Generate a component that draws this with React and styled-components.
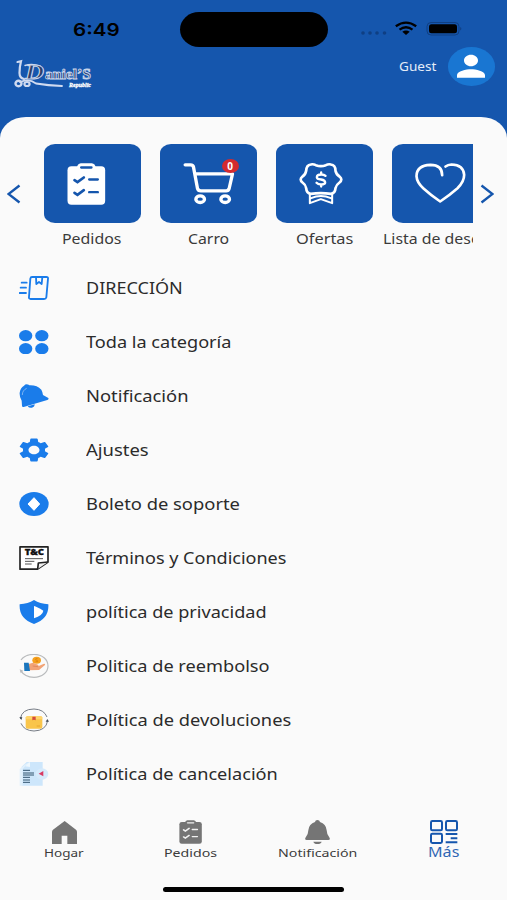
import React, { useLayoutEffect, useRef } from 'react'
import styled, { createGlobalStyle } from 'styled-components';
import { MdPerson, MdSettings } from 'react-icons/md';

const BLUE = '#1556ad';
const ICON = '#1a7cea';

function FitText({ width, children }) {
    const ref = useRef(null)
    useLayoutEffect(() => {
        const el = ref.current
        el.style.transform = `scaleX(${width / el.offsetWidth})`
    }, [width, children])
    return (
        <FitBox $w={width}>
            <FitInner ref={ref}>{children}</FitInner>
        </FitBox>
    )
}

function Logo() {
    return (
        <svg width="82" height="34" viewBox="0 0 82 34" fill="none">
            <g stroke="#cfdaf0" strokeLinecap="round">
                <path d="M5.5 4 L9 3.2 Q7.500 9 7.500 15 Q7.500 20 12 21" strokeWidth="2.2" />
                <ellipse cx="6.500" cy="25.500" rx="3" ry="2.800" strokeWidth="2.4" />
                <ellipse cx="15" cy="26" rx="2.600" ry="2" strokeWidth="2.2" />
                <path d="M8 24 Q17 20 24 25.500 Q36 27.500 50 28" strokeWidth="1.8" />
                <path d="M13 7.500 Q20 5 28 8" strokeWidth="1.4" />
            </g>
            <LogoText x="13" y="20.500" $size="20" $italic textLength="19" lengthAdjust="spacingAndGlyphs">D</LogoText>
            <LogoText x="33" y="20.500" $size="15.500" textLength="46" lengthAdjust="spacingAndGlyphs">aniel’S</LogoText>
            <LogoSmall x="57" y="29" textLength="22" lengthAdjust="spacingAndGlyphs">Republic</LogoSmall>
        </svg>
    )
}

function Terms() {
    return <TermsText x="76" y="405" textLength="58" lengthAdjust="spacingAndGlyphs">T&amp;C</TermsText>
}

function Clipboard({ fill, mark }) {
    return (
        <g>
            <rect x="204" y="107" width="113" height="116" rx="12" fill={fill} />
            <path d="M232 112 Q234 99 244 98 H277 Q287 99 289 112Z" fill={fill} />
            <path d="M245 111H276" stroke={mark} strokeWidth="7" strokeLinecap="round" />
            <path d="M225 149 L234 155 L253 141 M225 187 L234 193 L253 179" stroke={mark} strokeWidth="8" strokeLinecap="round" fill="none" />
            <path d="M269 147H295 M269 185H295" stroke={mark} strokeWidth="7" strokeLinecap="round" />
        </g>
    )
}

const cards = [
    {
        id: 'pedidos', name: 'Pedidos', width: 60, box: '133.5 40.5 291 237',
        icon: <Clipboard fill="#fff" mark={BLUE} />
    },
    {
        id: 'carro', name: 'Carro', width: 41, box: '481.5 40.5 291 237', badge: 0,
        icon: (
            <g stroke="#fff" strokeWidth="10" strokeLinecap="round" strokeLinejoin="round">
                <path d="M557 103 H573 Q581 103 582 110 L594 174 Q596 181 604 181 H680 Q687 181 689 174 L699 130 H588" />
                <ellipse cx="602" cy="206" rx="13" ry="10" />
                <ellipse cx="677" cy="206" rx="13" ry="10" />
            </g>
        )
    },
    {
        id: 'ofertas', name: 'Ofertas', width: 57, box: '58.5 40.5 291 237',
        icon: (
            <g stroke="#fff" strokeWidth="8" strokeLinejoin="round" strokeLinecap="round">
                <path d="M163 102 Q170 100 178 104 Q193 110 208 104 Q216 100 223 102 Q237 103 237 121 Q240 133 249 138 Q260 147 249 156 Q240 162 237 173 Q236 189 223 190 Q208 188 193 188 Q178 188 163 190 Q150 189 149 173 Q147 162 138 156 Q127 147 138 138 Q147 133 149 121 Q150 103 163 102Z" />
                <path d="M160 191 V218 L193 206 L227 218 V191 M164 203 Q193 190 223 203" strokeWidth="6" />
                <path d="M207 136 Q203 132 194 132 Q181 132 181 140 Q181 146 194 147 Q206 149 206 156 Q206 162 194 162 Q184 162 180 157 M194 126 V132 M194 162 V168" strokeWidth="7" />
            </g>
        )
    },
    {
        id: 'deseos', name: 'Lista de deseos', width: 114, box: '406.5 40.5 291 237',
        icon: (
            <path d="M557 134 Q557 103 522 103 Q480 105 480 137 Q481 156 501 174 Q523 194 551 213 Q579 194 603 173 Q623 154 623 133 Q621 103 585 102 Q574 103 567 108" stroke="#fff" strokeWidth="8" strokeLinecap="round" strokeLinejoin="round" />
        )
    },
];

const rows = [
    {
        name: 'DIRECCIÓN', width: 96.5, box: '59 48 90 72',
        icon: (
            <g stroke={ICON} strokeWidth="5.5" fill="none" strokeLinejoin="round" strokeLinecap="round">
                <path d="M98 51 H141 Q147 51 146 56 L141 112 Q140 117 134 117 H94 Q88 117 89 111 L93 56 Q94 51 98 51Z" />
                <path d="M110 51 L111 72 L119 66 L127 72 L129 51" />
                <path d="M67 68H82 M64 83H80 M61 99H80" />
            </g>
        )
    },
    {
        name: 'Toda la categoría', width: 145, box: '59 209 90 72',
        icon: (
            <g fill={ICON}>
                <ellipse cx="79" cy="226" rx="20" ry="17" />
                <ellipse cx="127.5" cy="226" rx="20" ry="17" />
                <ellipse cx="79" cy="265" rx="20" ry="17" />
                <ellipse cx="127.5" cy="265" rx="20" ry="17" />
            </g>
        )
    },
    {
        name: 'Notificación', width: 103, box: '59 371 90 72',
        icon: (
            <g>
                <path d="M74 376 Q79 370 88 373 L90 375 Q113 374 126 388 Q130 395 131 404 L147 413 Q149 417 144 419 L73 440 Q68 441 68 436 L67 421 Q60 411 61 397 Q63 382 74 376Z" fill={ICON} />
                <path d="M85 438 L106 432 Q107 440 98 442 Q90 444 85 438Z" fill={ICON} />
                <path d="M82 384 Q69 390 69 404" stroke="#a9cdf6" strokeWidth="2" fill="none" />
            </g>
        )
    },
    { name: 'Ajustes', width: 63, gear: true },
    {
        name: 'Boleto de soporte', width: 154, box: '59 216 90 72',
        icon: (
            <g>
                <ellipse cx="104" cy="252" rx="44" ry="36" fill={ICON} />
                <path d="M104 233 L121 252 L104 271 L86 252Z" fill="#fff" stroke="#fff" strokeWidth="3" strokeLinejoin="round" />
            </g>
        )
    },
    {
        name: 'Términos y Condiciones', width: 200, box: '59 378 90 72',
        icon: (
            <g fill="none" stroke="#222" strokeWidth="5">
                <path d="M62 380.5 H146 V426 L115 447.5 H62Z" fill="#fff" strokeLinejoin="round" />
                <path d="M115 447 L117 429 L146 426" fill="#eee" strokeLinejoin="round" />
                <path d="M77 416H131 M77 424H105 M77 432H97" strokeWidth="3" stroke="#555" />
                <Terms />
            </g>
        )
    },
    {
        name: 'política de privacidad', width: 181, box: '59 60 90 72',
        icon: (
            <g>
                <path d="M104 60 Q122 71 147 73 Q150 116 104 132 Q58 116 61 73 Q86 71 104 60Z" fill={ICON} />
                <path d="M104 78 Q112 80 132 92 Q130 106 104 115Z" fill="#fff" />
            </g>
        )
    },
    {
        name: 'Politica de reembolso', width: 184, box: '59 222 90 72',
        icon: (
            <g>
                <path d="M65 240 Q77 223 104 223 C129 223 146 239 146 258 C146 277 128 292 104 292 Q76 291 64 272" stroke="#b9bbbd" strokeWidth="3.5" fill="none" />
                <path d="M61 268 L64 280 L72 272Z" fill="#b9bbbd" />
                <ellipse cx="112" cy="241" rx="13" ry="10.5" fill="#f5a11d" />
                <path d="M115 236 Q108 234 108 239 Q116 240 115 245 L109 245" stroke="#d77b0c" strokeWidth="2" fill="none" />
                <path d="M88 252 L101 248 L116 254 L118 258 L134 251 Q139 251 137 255 L119 270 L88 271Z" fill="#f2a477" />
                <path d="M100 258 L116 260" stroke="#d77c51" strokeWidth="2" />
                <path d="M74 248 H88 L92 273 H75Z" fill="#1b76bd" />
            </g>
        )
    },
    {
        name: 'Política de devoluciones', width: 205, box: '59 384 90 72',
        icon: (
            <g>
                <path d="M63 417 Q67 387 104 387 Q134 388 143 411 M145 422 Q140 452 104 453 Q74 452 65 430" stroke="#777d86" strokeWidth="3" fill="none" />
                <path d="M60 411 L66 420 L69 412Z M139 425 L144 417 L149 425Z" fill="#444b55" />
                <path d="M79 417 Q79 410 84 409 H125 Q129 410 129 417 V441 Q129 446 123 446 H85 Q79 446 79 441Z" fill="#f9c54b" />
                <path d="M79 418 H129 V412 Q128 409 125 409 H84 Q80 409 79 412Z" fill="#ffd469" />
                <path d="M99 410 H109 V421 L104 419 L99 421Z" fill="#d44a3b" />
                <path d="M112 438H122" stroke="#e7a62c" strokeWidth="3" />
            </g>
        )
    },
    {
        name: 'Política de cancelación', width: 192, box: '59 546 90 72',
        icon: (
            <g>
                <path d="M67 560 L82 546 H130 V617 H67Z" fill="#cde6fb" />
                <path d="M61 567 L76 554 L91 546 V556 H80 L70 567 V617 H61Z" fill="#e2f1fc" />
                <path d="M78 559 L92 546 V561Z" fill="#edf7fe" />
                <ellipse cx="128" cy="582" rx="19" ry="17" fill="#d6eafb" />
                <path d="M71 571H92 M71 579H104 M71 585H104 M71 592H92 M71 600H92 M71 607H92" stroke="#34566f" strokeWidth="3" />
                <path d="M118 581 L132 573 V589Z" fill="#d83a62" />
            </g>
        )
    },
];

const tabs = [
    {
        name: 'Hogar', width: 40, box: '156 60 75 72',
        icon: <path d="M194 63 L228 89 Q231 92 231 96 V132 H202 V107 H185 V132 H156 V96 Q156 92 159 89Z" fill="#757575" />
    },
    {
        name: 'Pedidos', width: 53, box: '197 96 126 129',
        icon: <Clipboard fill="#757575" mark="#f2f2f2" />
    },
    {
        name: 'Notificación', width: 79, box: '144 60 75 72',
        icon: <path d="M181 60 Q188 60 189 66 Q207 71 209 91 Q209 104 218 114 Q220 120 214 120 H149 Q143 120 145 114 Q154 104 154 91 Q156 71 174 66 Q175 60 181 60Z M169 125 H194 Q192 132 181 132 Q171 132 169 125Z" fill="#757575" />
    },
    {
        name: 'Más', width: 31, box: '518 61 84 70', active: true,
        icon: (
            <g stroke={BLUE} strokeWidth="6" fill="none">
                <rect x="521" y="64" width="33" height="27" rx="4" />
                <rect x="566" y="64" width="33" height="27" rx="4" />
                <rect x="521" y="101" width="33" height="27" rx="4" />
                <path d="M565 102H600 M580 114H600 M565 126H600" />
            </g>
        )
    },
];

export default function App() {
    return (
        <Screen>
            <GlobalStyle />
            <Header>
                <StatusBar>
                    <Clock><FitText width={47}>6:49</FitText></Clock>
                    <Island />
                    <Signals>
                        <svg width="102" height="15" viewBox="0 0 102 15">
                            <g fill="#0f3f83">
                                <circle cx="3" cy="12" r="1.8" />
                                <circle cx="10" cy="12" r="1.8" />
                                <circle cx="17" cy="12" r="1.8" />
                                <circle cx="24.5" cy="12" r="1.8" />
                            </g>
                            <g fill="none" stroke="#000" strokeWidth="2.3">
                                <path d="M35.8 5.3 Q46 -2 56.2 5.3" />
                                <path d="M39.5 8.7 Q46 3.8 52.5 8.7" />
                            </g>
                            <path d="M42.3 10.8 Q46 8.3 49.7 10.8 L46 14Z" />
                            <rect x="67" y="1.5" width="32" height="12.5" rx="4" fill="none" stroke="#103f82" />
                            <rect x="69" y="3.2" width="28" height="9" rx="2.5" />
                            <path d="M100.2 6 Q102.5 7.7 100.2 9.5Z" fill="#103f82" />
                        </svg>
                    </Signals>
                </StatusBar>
                <Brand>
                    <Logo />
                    <User>
                        <FitText width={37}>Guest</FitText>
                        <Avatar><MdPerson preserveAspectRatio="none" /></Avatar>
                    </User>
                </Brand>
            </Header>
            <Panel>
                <Carousel>
                    <Arrow>
                        <svg width="14" height="20" viewBox="0 0 14 20"><path d="M12.5 1.5 L1.5 10 L12.5 18.5" /></svg>
                    </Arrow>
                    <Scroller>
                        {cards.map((card) => (
                            <CardItem key={card.id}>
                                <Card>
                                    <svg width="97" height="79" viewBox={card.box} fill="none">{card.icon}</svg>
                                    {card.badge !== undefined && <Badge>{card.badge}</Badge>}
                                </Card>
                                <FitText width={card.width}>{card.name}</FitText>
                            </CardItem>
                        ))}
                    </Scroller>
                    <Arrow>
                        <svg width="14" height="20" viewBox="0 0 14 20"><path d="M1.5 1.5 L12.5 10 L1.5 18.5" /></svg>
                    </Arrow>
                </Carousel>
                <Menu>
                    {rows.map((row) => (
                        <MenuRow key={row.name}>
                            {row.gear
                                ? <MdSettings viewBox="2.2 2 19.6 20" preserveAspectRatio="none" />
                                : <svg viewBox={row.box}>{row.icon}</svg>}
                            <FitText width={row.width}>{row.name}</FitText>
                        </MenuRow>
                    ))}
                </Menu>
            </Panel>
            <TabBar>
                {tabs.map((tab) => (
                    <Tab key={tab.name} $active={tab.active}>
                        <svg viewBox={tab.box} preserveAspectRatio="none">{tab.icon}</svg>
                        <FitText width={tab.width}>{tab.name}</FitText>
                    </Tab>
                ))}
            </TabBar>
            <HomeIndicator />
        </Screen>
    )
}

const GlobalStyle = createGlobalStyle`
    body
    {
        margin:0;
        background:#fafafa;
        font-family:"Noto Sans", "Open Sans", sans-serif;
        color:#2b2b2b;
    }
    *
    {
        box-sizing:border-box;
    }
    svg
    {
        display:block;
        flex-shrink:0;
    }
`;

const FitBox = styled.span`
    display:block;
    width:${(p) => p.$w}px;
    flex-shrink:0;
    white-space:nowrap;
`;

const FitInner = styled.span`
    display:inline-block;
    transform-origin:left center;
`;

const Screen = styled.div`
    width:507px;
    height:900px;
    display:flex;
    flex-direction:column;
    overflow:hidden;
    background:${BLUE};
`;

const Header = styled.header`
    height:117px;
    color:#fff;
`;

const StatusBar = styled.div`
    height:47px;
    display:grid;
    grid-template-columns:180px 148px 1fr;
    padding-top:12px;
`;

const Clock = styled.div`
    padding:7px 0 0 72.5px;
    font-family:Inter, sans-serif;
    font-weight:600;
    font-size:17.5px;
    line-height:21px;
    color:#000;
`;

const Island = styled.div`
    height:35px;
    border-radius:19px / 17.5px;
    background:#000;
`;

const Signals = styled.div`
    padding:9px 0 0 32px;
`;

const Brand = styled.div`
    display:flex;
    justify-content:space-between;
    align-items:flex-start;
    padding:0 12px;
    > svg
    {
        margin-top:11px;
    }
`;

const LogoText = styled.text`
    font-family:"Liberation Serif", serif;
    font-style:${(p) => (p.$italic ? 'italic' : 'normal')};
    font-weight:bold;
    font-size:${(p) => p.$size}px;
    fill:#2c3f68;
    stroke:#c9d5ec;
    stroke-width:0.9px;
`;

const LogoSmall = styled.text`
    font-family:"Liberation Serif", serif;
    font-style:italic;
    font-weight:bold;
    font-size:6px;
    fill:#fff;
    stroke:#fff;
    stroke-width:0.3px;
`;

const User = styled.div`
    display:flex;
    align-items:center;
    gap:12px;
    font-size:12.5px;
    line-height:18px;
    color:#e4ecf8;
`;

const Avatar = styled.div`
    width:47.5px;
    height:39px;
    border-radius:50%;
    background:#1976d2;
    display:flex;
    align-items:center;
    justify-content:center;
    svg
    {
        width:42px;
        height:34.5px;
        color:#fff;
    }
`;

const Panel = styled.main`
    height:699px;
    padding-top:26.5px;
    border-radius:26px 26px 0 0 / 21px 21px 0 0;
    background:#fafafa;
`;

const Carousel = styled.div`
    display:grid;
    grid-template-columns:34px 439px 34px;
`;

const Arrow = styled.div`
    padding:40px 0 0 7px;
    svg path
    {
        fill:none;
        stroke:${BLUE};
        stroke-width:2.4px;
    }
`;

const Scroller = styled.div`
    display:flex;
    height:117px;
    overflow:hidden;
`;

const CardItem = styled.div`
    flex:0 0 116px;
    display:flex;
    flex-direction:column;
    align-items:center;
    gap:6px;
    font-size:13.5px;
    line-height:20px;
    color:#3a3a3a;
`;

const Card = styled.div`
    position:relative;
    width:97px;
    height:79px;
    border-radius:11px / 9px;
    background:${BLUE};
`;

const Badge = styled.span`
    position:absolute;
    top:15px;
    left:62px;
    width:17px;
    height:14px;
    border-radius:50%;
    background:#d32a2f;
    color:#fff;
    font-size:10px;
    font-weight:bold;
    line-height:14px;
    text-align:center;
`;

const Menu = styled.div`
    display:flex;
    flex-direction:column;
`;

const MenuRow = styled.div`
    height:54px;
    display:flex;
    align-items:center;
    gap:37px;
    padding-left:19px;
    font-size:15.5px;
    line-height:24px;
    > svg
    {
        width:30px;
        height:24px;
        color:${ICON};
    }
`;

const TermsText = styled.text`
    font-family:"Noto Sans", sans-serif;
    font-weight:900;
    font-size:24px;
    fill:#111;
    stroke:#111;
    stroke-width:0.8px;
`;

const TabBar = styled.nav`
    height:71px;
    display:grid;
    grid-template-columns:repeat(4, 126.5px);
    padding:4px 0 0 1px;
    background:#fafafa;
`;

const Tab = styled.div`
    display:flex;
    flex-direction:column;
    align-items:center;
    gap:${(p) => (p.$active ? '0' : '1px')};
    font-size:${(p) => (p.$active ? '13.5px' : '11.5px')};
    line-height:16px;
    color:${(p) => (p.$active ? '#2f66b4' : '#3c3c3c')};
    > svg
    {
        width:${(p) => (p.$active ? '28px' : '25px')};
        height:24px;
    }
`;

const HomeIndicator = styled.div`
    flex:1;
    background:#fafafa;
    &::before
    {
        content:"";
        display:block;
        width:181px;
        height:5px;
        margin:0 auto;
        border-radius:3px;
        background:#000;
    }
`;
